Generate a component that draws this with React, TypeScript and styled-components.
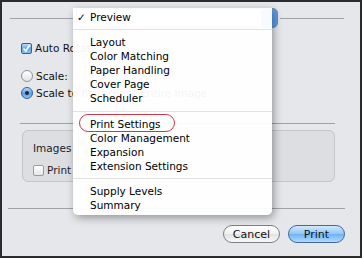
import React from "react";
import styled, { createGlobalStyle } from "styled-components";

const GlobalStyle = createGlobalStyle`
  body {
    margin: 0;
    background: #ffffff;
    font-family: "DejaVu Sans", "Liberation Sans", sans-serif;
  }
`;

const Frame = styled.div`
  position: relative;
  box-sizing: border-box;
  width: 362px;
  height: 258px;
  border: 2px solid #2b2b2d;
  padding-top: 6px;
  background: #e5e7ea;
  overflow: hidden;
  font-size: 10.5px;
  color: #111;
`;

const TopBar = styled.div`
  display: flex;
  align-items: center;
  gap: 2px;
  height: 20px;
  padding: 0 16px 0 8px;
`;

const Rule = styled.div<{ $left: number; $right: number; $top: number }>`
  height: 1px;
  background: #9fa2a6;
  margin: ${(p) => p.$top}px ${(p) => p.$right}px 0 ${(p) => p.$left}px;
`;

const Line = styled.div`
  flex: 1;
  height: 1px;
  background: #9fa2a6;
`;

const PopupButton = styled.div`
  width: 202px;
  height: 20px;
  box-sizing: border-box;
  border: 1px solid #7a8aa6;
  border-radius: 5px;
  background: linear-gradient(to right, #fff 92%, #5c9ee8 92%);
`;

const Options = styled.div`
  margin-top: 13px;
  padding-left: 19px;
  display: flex;
  flex-direction: column;
`;

const Row = styled.div<{ $gap: number }>`
  display: flex;
  align-items: center;
  height: 14px;
  gap: 3px;
  margin-top: ${(p) => p.$gap}px;
  white-space: nowrap;
`;

const Box = styled.span<{ $on?: boolean }>`
  display: inline-flex;
  align-items: center;
  justify-content: center;
  box-sizing: border-box;
  width: 11px;
  height: 11px;
  border-radius: 2px;
  border: 1px solid ${(p) => (p.$on ? "#35609a" : "#9a9c9f")};
  background: ${(p) =>
    p.$on
      ? "linear-gradient(#b8d8f8, #5da2e6 55%, #8cc4f6)"
      : "linear-gradient(#ffffff, #e6e6e6)"};
`;

const Radio = styled.span<{ $on?: boolean }>`
  display: inline-flex;
  align-items: center;
  justify-content: center;
  box-sizing: border-box;
  width: 12px;
  height: 12px;
  border-radius: 50%;
  border: 1px solid ${(p) => (p.$on ? "#35609a" : "#8f9194")};
  background: ${(p) =>
    p.$on
      ? "linear-gradient(#b8d8f8, #5da2e6 55%, #8cc4f6)"
      : "linear-gradient(#ffffff, #e4e4e4)"};
  &::after {
    content: "";
    display: ${(p) => (p.$on ? "block" : "none")};
    width: 4px;
    height: 4px;
    border-radius: 50%;
    background: #1c2a3c;
  }
`;

const Faint = styled.span`
  margin-left: 14px;
  color: #333;
`;

const Group = styled.div`
  margin: 6px 25px 0 20px;
  height: 52px;
  box-sizing: border-box;
  border: 1px solid #c3c5c9;
  border-radius: 6px;
  background: #dcdee2;
  padding: 10px 0 0 10px;
  color: #222;
`;

const GroupTitle = styled.div`
  height: 14px;
  line-height: 14px;
`;

const Footer = styled.div`
  display: flex;
  justify-content: flex-end;
  gap: 8px;
  margin-top: 16px;
  padding-right: 15px;
`;

const PushButton = styled.div<{ $primary?: boolean }>`
  width: 57px;
  height: 18px;
  box-sizing: border-box;
  border-radius: 9px;
  display: flex;
  align-items: center;
  justify-content: center;
  font-size: 11px;
  color: #111;
  border: 1px solid ${(p) => (p.$primary ? "#46689a" : "#7d7f82")};
  background: ${(p) =>
    p.$primary
      ? "linear-gradient(#d2e9fd, #8cc6f6 50%, #6db3f2 51%, #b0dafd)"
      : "linear-gradient(#ffffff, #f1f1f1 50%, #e2e2e2 51%, #f8f8f8)"};
`;

const Menu = styled.div`
  position: absolute;
  left: 71px;
  top: 6px;
  width: 199px;
  height: 207px;
  box-sizing: border-box;
  padding-top: 2px;
  background: rgba(255, 255, 255, 0.95);
  border-radius: 0 0 5px 5px;
  box-shadow: 2px 3px 8px rgba(0, 0, 0, 0.35);
  font-size: 10.5px;
  color: #000;
`;

const MenuItem = styled.div`
  position: relative;
  height: 14px;
  line-height: 14px;
  padding-left: 17px;
  white-space: nowrap;
`;

const Check = styled.span`
  position: absolute;
  left: 4px;
  top: 0;
`;

const MenuSep = styled.div<{ $h: number }>`
  height: ${(p) => p.$h}px;
  display: flex;
  align-items: center;
  &::after {
    content: "";
    flex: 1;
    height: 1px;
    background: #e2e2e2;
  }
`;

const Annotation = styled.div`
  position: absolute;
  left: 6px;
  top: 106px;
  width: 96px;
  height: 18px;
  box-sizing: border-box;
  border: 1px solid #cc3a48;
  border-radius: 9px;
`;

const Tick = () => (
  <svg width="9" height="9" viewBox="0 0 9 9">
    <path d="M1.5 4.5 L3.8 7 L7.8 1" stroke="#fff" strokeWidth="1.6" fill="none" />
  </svg>
);

const groups = [
  ["Layout", "Color Matching", "Paper Handling", "Cover Page", "Scheduler"],
  ["Print Settings", "Color Management", "Expansion", "Extension Settings"],
  ["Supply Levels", "Summary"],
];

export default function App() {
  return (
    <>
      <GlobalStyle />
      <Frame>
        <TopBar>
          <Line />
          <PopupButton />
          <Line />
        </TopBar>
        <Options>
          <Row $gap={0}>
            <Box $on>
              <Tick />
            </Box>
            <span>Auto Rotate</span>
          </Row>
          <Row $gap={14}>
            <Radio />
            <span>Scale:</span>
          </Row>
          <Row $gap={3}>
            <Radio $on />
            <span>Scale to fit:</span>
            <Faint>Print Entire Image</Faint>
          </Row>
        </Options>
        <Rule $left={18} $right={25} $top={23} />
        <Group>
          <GroupTitle>Images</GroupTitle>
          <Row $gap={8}>
            <Box />
            <span>Print</span>
          </Row>
        </Group>
        <Rule $left={6} $right={15} $top={26} />
        <Footer>
          <PushButton>Cancel</PushButton>
          <PushButton $primary>Print</PushButton>
        </Footer>
        <Menu>
          <MenuItem>
            <Check>✓</Check>Preview
          </MenuItem>
          {groups.map((g, i) => (
            <React.Fragment key={i}>
              <MenuSep $h={i === 1 ? 12 : 11} />
              {g.map((item) => (
                <MenuItem key={item}>{item}</MenuItem>
              ))}
            </React.Fragment>
          ))}
          <Annotation />
        </Menu>
      </Frame>
    </>
  );
}
